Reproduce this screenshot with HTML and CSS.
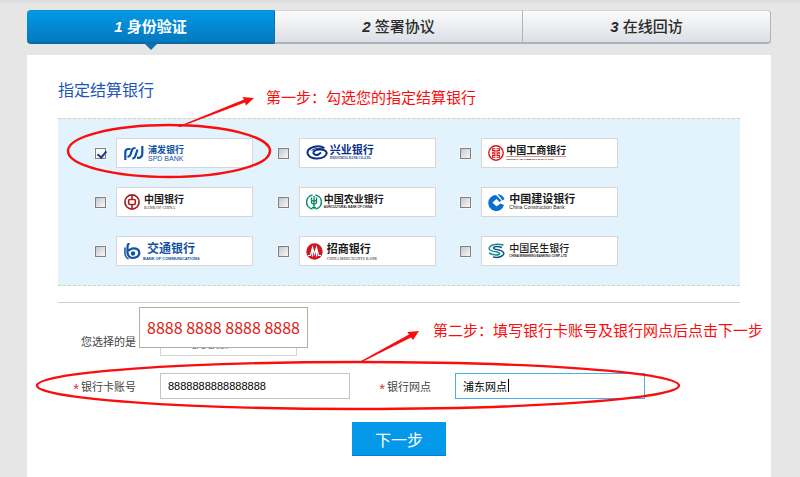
FILE: index.html
```html
<!DOCTYPE html>
<html lang="zh-CN">

<head>
  <meta charset="UTF-8">
  <title>指定结算银行</title>
  <link rel="stylesheet" href="styles.css">
</head>

<body>
  <ol class="steps">
    <li class="step step-on"><em>1</em> 身份验证</li>
    <li class="step"><em>2</em> 签署协议</li>
    <li class="step"><em>3</em> 在线回访</li>
  </ol>

  <form class="panel">
    <h2 class="panel-title">指定结算银行</h2>

    <!-- 银行列表 -->
    <div class="bank-list">
      <label class="bank">
        <input type="checkbox" class="bank-check" checked>
        <span class="bank-box spd">
          <svg width="20" height="16" viewBox="0 0 20 16" fill="none" stroke="#0f52a5" stroke-width="2.2">
            <path d="M1.300 15V7.500Q1.300 4 4.500 4H6.500"/>
            <path d="M3.500 11.500Q5.800 11.800 6.500 9.500L8 5Q8.700 3 11.500 3"/>
            <path d="M8.300 13.300Q10.500 13.500 11.200 11.500L13.500 4.500"/>
            <path d="M13 12.800H14.500Q18.300 12.500 18.300 8.500V1"/>
          </svg>
          <span class="bank-name">
            <b>浦发银行</b>
            <i>SPD BANK</i>
          </span>
        </span>
      </label>
      <label class="bank">
        <input type="checkbox" class="bank-check">
        <span class="bank-box cib">
          <svg width="22" height="16" viewBox="0 0 22 16" fill="none" stroke="#0b2f86">
            <path d="M18.500 3C14 .3 6 1 2.500 4.800C-.3 8.500 3 13.300 10 13.600C17 13.800 21.500 10.500 20.500 7.300C19 3.800 10.500 3.800 8 6.300C6 9.300 10 10.600 12.500 9.500L15 7.500" stroke-width="2"/>
            <path d="M5.500 5.500Q11 1.800 18 4.500" stroke-width="1"/>
          </svg>
          <span class="bank-name">
            <b>兴业银行</b>
            <i>INDUSTRIAL BANK CO.,LTD.</i>
          </span>
        </span>
      </label>
      <label class="bank">
        <input type="checkbox" class="bank-check">
        <span class="bank-box icbc">
          <svg width="16" height="16" viewBox="0 0 16 16" fill="none" stroke="#d7151a">
            <circle cx="8" cy="8" r="7.200" stroke-width="1.400"/>
            <path d="M7.500 3.800H4.500V5.500H7V7.300H3.800M8.500 3.800H11.500V5.500H9V7.300H12.200" stroke-width="1.100"/>
            <path d="M7.500 12.200H4.500V10.500H7V8.700H3.800M8.500 12.200H11.500V10.500H9V8.700H12.200" stroke-width="1.100"/>
          </svg>
          <span class="bank-name">
            <b>中国工商银行</b>
            <i>INDUSTRIAL AND COMMERCIAL BANK OF CHINA</i>
          </span>
        </span>
      </label>
      <label class="bank">
        <input type="checkbox" class="bank-check">
        <span class="bank-box boc">
          <svg width="16" height="16" viewBox="0 0 16 16" fill="none" stroke="#a71e26">
            <circle cx="8" cy="8" r="7.100" stroke-width="1.700"/>
            <rect x="4.700" y="5.500" width="6.600" height="5" rx="1" stroke-width="1.600"/>
            <path d="M8 1V5.500M8 10.500V15" stroke-width="1.600"/>
          </svg>
          <span class="bank-name">
            <b>中国银行</b>
            <i>BANK OF CHINA</i>
          </span>
        </span>
      </label>
      <label class="bank">
        <input type="checkbox" class="bank-check">
        <span class="bank-box abc">
          <svg width="16" height="16" viewBox="0 0 16 16" fill="none" stroke="#068a68">
            <path d="M6.500 1A7.100 7.100 0 0 0 6.500 15M9.500 1A7.100 7.100 0 0 1 9.500 15" stroke-width="1.500"/>
            <path d="M8 2V15M5.500 3.500V6L8 7.500L10.500 6V3.500M5.500 6.500V9L8 10.500L10.500 9V6.500" stroke-width="1.300"/>
            <path d="M6 13.500H10" stroke-width="1.200"/>
          </svg>
          <span class="bank-name">
            <b>中国农业银行</b>
            <i>AGRICULTURAL BANK OF CHINA</i>
          </span>
        </span>
      </label>
      <label class="bank">
        <input type="checkbox" class="bank-check">
        <span class="bank-box ccb">
          <svg width="17" height="17" viewBox="0 0 17 17" fill="#0a6fd0">
            <path d="M8 1A8 8 0 1 0 16 11L12.500 9.500L8.500 12.500L4.500 8.500L8.500 5L11.500 8L13.500 6.500Z"/>
            <path d="M9.500 0Q14.500 .5 16.500 5L14.500 6.500Q12.500 3 9.500 0Z"/>
          </svg>
          <span class="bank-name">
            <b>中国建设银行</b>
            <i>China Construction Bank</i>
          </span>
        </span>
      </label>
      <label class="bank">
        <input type="checkbox" class="bank-check">
        <span class="bank-box bcm">
          <svg width="17" height="17" viewBox="0 0 17 17" fill="none" stroke="#14529f">
            <path d="M5.500 0Q3.500 1 3.500 4V10Q4.500 15 9 15Q15.300 14.500 15.300 9.500Q14.500 4.800 8 5.500L3.500 8" stroke-width="2.200"/>
            <path d="M1 4.500V11Q1.500 14.500 4.500 16" stroke-width="1.500"/>
            <circle cx="9" cy="10.500" r="2.200" fill="#14529f" stroke="none"/>
          </svg>
          <span class="bank-name">
            <b>交通银行</b>
            <i>BANK OF COMMUNICATIONS</i>
          </span>
        </span>
      </label>
      <label class="bank">
        <input type="checkbox" class="bank-check">
        <span class="bank-box cmb">
          <svg width="17" height="17" viewBox="0 0 17 17">
            <circle cx="8.500" cy="8.500" r="8.200" fill="#cf1720"/>
            <path d="M2 12.500H4.500L6.500 4.500L8.500 11L10.500 4.500L12.500 12.500H15M6.500 5V13.500M10.500 5V13.500" fill="none" stroke="#fff" stroke-width="1.200"/>
          </svg>
          <span class="bank-name">
            <b>招商银行</b>
            <i>CHINA MERCHANTS BANK</i>
          </span>
        </span>
      </label>
      <label class="bank">
        <input type="checkbox" class="bank-check">
        <span class="bank-box cmbc">
          <svg width="17" height="16" viewBox="0 0 17 16" fill="none">
            <path d="M15.500 2Q9 .5 4.500 2Q-.5 4.500 2 7Q4 8.500 9 9Q13 10 11 11.500Q7 13 1 10" stroke="#158c8c" stroke-width="1.500"/>
            <path d="M14 4.500Q8 2.500 5.500 4.500Q5 6 10 6.800Q17 8.500 15.500 11.500Q12 15.500 5 14" stroke="#17558f" stroke-width="1.500"/>
          </svg>
          <span class="bank-name">
            <b>中国民生银行</b>
            <i>CHINA MINSHENG BANKING CORP.,LTD</i>
          </span>
        </span>
      </label>
    </div>

    <!-- 账号信息 -->
    <div class="row">
      <span class="row-label">您选择的是</span>
      <div class="chosen">
        <span class="bank-box spd">
          <svg width="20" height="16" viewBox="0 0 20 16" fill="none" stroke="#0f52a5" stroke-width="2.2">
            <path d="M1.300 15V7.500Q1.300 4 4.500 4H6.500"/>
            <path d="M3.500 11.500Q5.800 11.800 6.500 9.500L8 5Q8.700 3 11.500 3"/>
            <path d="M8.300 13.300Q10.500 13.500 11.200 11.500L13.500 4.500"/>
            <path d="M13 12.800H14.500Q18.300 12.500 18.300 8.500V1"/>
          </svg>
          <span class="bank-name">
            <b>浦发银行</b>
            <i>SPD BANK</i>
          </span>
        </span>
        <div class="card-tip">8888 8888 8888 8888</div>
      </div>
    </div>
    <div class="row">
      <label class="row-label" for="card"><span class="must">*</span>银行卡账号</label>
      <input type="text" id="card" class="row-input" value="8888888888888888">
      <label class="row-label" for="branch"><span class="must">*</span>银行网点</label>
      <span class="branch">
        <input type="text" id="branch" class="row-input row-input-on" value="浦东网点">
        <span class="caret"></span>
      </span>
    </div>
    <button type="button" class="next">下一步</button>

    <!-- 操作提示 -->
    <svg class="marks" width="744" height="422" viewBox="0 0 744 422" fill="none" stroke="#fb0d0d" stroke-width="2.4">
      <ellipse cx="142" cy="96" rx="101" ry="26"/>
      <ellipse cx="331" cy="330.500" rx="321" ry="23.500"/>
      <g fill="#fb0d0d" stroke="none">
        <path d="M151 71.500L217 44.500L215.500 42L227 43L219 50.500L218 47.500L153 72Z"/>
        <path d="M334 306L382 279.500L380.500 277L392 276L386 285L384 282.500L335 307Z"/>
      </g>
    </svg>
    <span class="note note-one">第一步：勾选您的指定结算银行</span>
    <span class="note note-two">第二步：填写银行卡账号及银行网点后点击下一步</span>
  </form>
</body>

</html>
```
FILE: styles.css
```css
* {
  box-sizing: border-box;
}

body {
  margin: 0px;
  padding: 10px 29px 0px 27px;
  min-height: 100vh;
  display: flex;
  flex-direction: column;
  background: #e6e6e6 linear-gradient(#dadada, #e6e6e6) no-repeat 0px 0px / 100% 4px;
  font-family: "Liberation Sans", "Noto Sans CJK SC", sans-serif;
  font-size: 11px;
  color: #444;
}

/* 步骤条 */
.steps {
  display: flex;
  margin: 0px 0px 11px 0px;
  padding: 0px;
  height: 34px;
  list-style: none;
}

.step {
  flex: 1;
  position: relative;
  line-height: 31px;
  text-align: center;
  font-size: 15px;
  font-weight: 500;
  color: #2b2b2b;
  background: linear-gradient(#fafbfc, #dcdfe5);
  border-top: 1px solid #d4d6da;
  border-bottom: 2px solid #abb3bd;
  border-right: 1px solid #abb3bd;
}

.step em {
  font-weight: bold;
}

.step:last-child {
  border-radius: 0px 4px 4px 0px;
}

.step-on {
  color: #fff;
  font-weight: bold;
  background: linear-gradient(#0299e6, #0579bd);
  border-color: #1588cb #0b6fb0 #0b69a6;
  border-radius: 4px 0px 0px 4px;
}

/* 当前步骤的小三角 */
.step-on::after {
  content: "";
  position: absolute;
  left: 50%;
  top: 32px;
  margin-left: -7px;
  border: 7px solid transparent;
  border-top-color: #0b6fb0;
  border-bottom: 0px;
}

.panel {
  flex: 1;
  position: relative;
  padding: 26px 31px 20px 31px;
  background: #fff;
}

.panel-title {
  margin: 0px 0px 17px 0px;
  line-height: 20px;
  font-size: 16px;
  font-weight: normal;
  color: #1c57b5;
}

/* 银行列表 */
.bank-list {
  display: grid;
  grid-template-columns: repeat(3, 1fr);
  row-gap: 19px;
  padding: 19px 97px 19px 37px;
  background: #e2f3fe;
  border-top: 1px dashed #d6d3ac;
  border-bottom: 1px dashed #d6d3ac;
}

.bank {
  display: flex;
  align-items: center;
  gap: 10px;
}

.bank-check {
  appearance: none;
  flex: none;
  position: relative;
  margin: 0px;
  width: 11px;
  height: 11px;
  border: 1px solid #808080;
  outline: 1px solid #f2f7fa;
  background: linear-gradient(135deg, #c4c8cd, #f8f8f8);
}

.bank-check:checked {
  background: #f8f8f8;
}

.bank-check:checked::after {
  content: "";
  position: absolute;
  left: 3px;
  top: 0px;
  width: 4px;
  height: 7px;
  border: solid #24398a;
  border-width: 0px 2px 2px 0px;
  transform: rotate(40deg);
}

.bank-box {
  display: flex;
  align-items: center;
  gap: 4px;
  width: 137px;
  height: 30px;
  padding-left: 6px;
  background: #fff;
  border: 1px solid #d6d6d6;
}

.bank-box svg {
  flex: none;
}

.bank-name b,
.bank-name i {
  display: block;
  font-style: normal;
  white-space: nowrap;
}

.bank-name b {
  font-size: 10px;
  line-height: 11px;
}

.bank-name i {
  font-size: 4px;
  line-height: 5px;
}

.spd {
  color: #0f52a5;
  padding-left: 7px;
}

.spd .bank-name b {
  font-size: 9px;
  line-height: 10px;
}

.spd .bank-name i {
  font-size: 7px;
  line-height: 7px;
}

.cib {
  color: #0b2f86;
}

.cib .bank-name b,
.ccb .bank-name b {
  font-size: 11px;
}

.cib .bank-name i,
.abc .bank-name i,
.cmbc .bank-name i {
  font-size: 3px;
  font-weight: bold;
}

.icbc,
.boc,
.abc,
.ccb,
.cmb,
.cmbc {
  color: #1a1a1a;
}

.icbc,
.cib,
.abc,
.bcm {
  gap: 2px;
}

.icbc .bank-name b {
  border-bottom: 1px solid #e58b8b;
}

.icbc .bank-name i {
  font-size: 2px;
  line-height: 4px;
  font-weight: bold;
}

.boc,
.bcm {
  padding-left: 7px;
}

.boc .bank-name i,
.cmb .bank-name i,
.cib .bank-name i {
  font-family: "Liberation Serif", serif;
}

.ccb .bank-name i {
  font-size: 5px;
}

.bcm {
  color: #14529f;
}

.bcm .bank-name b {
  padding-left: 4px;
  font-size: 12px;
  line-height: 14px;
}

.bcm .bank-name i {
  font-weight: bold;
}

.cmb .bank-name b {
  font-size: 11px;
  line-height: 14px;
}

.cmbc .bank-name b {
  font-weight: 500;
}

/* 账号信息 */
.row {
  display: flex;
  align-items: center;
  margin-top: 17px;
}

.bank-list + .row {
  margin-top: 16px;
  padding-top: 23px;
  border-top: 1px solid #cfcfcf;
}

.row-label {
  width: 78px;
  margin-right: 24px;
  text-align: right;
  white-space: nowrap;
}

.row-input + .row-label {
  width: 81px;
}

.must {
  margin-right: 2px;
  font-size: 15px;
  line-height: 11px;
  vertical-align: middle;
  color: #e0312f;
}

.row-input {
  display: block;
  width: 190px;
  height: 26px;
  padding: 0px 7px;
  border: 1px solid #c4c4c4;
  outline: none;
  background: #fff;
  font-family: inherit;
  font-size: 11px;
  color: #000;
}

.row-input-on {
  border-color: #45b2ea;
}

.branch {
  position: relative;
}

.caret {
  position: absolute;
  left: 53px;
  top: 6px;
  width: 1px;
  height: 13px;
  background: #000;
}

.chosen {
  position: relative;
}

.card-tip {
  position: absolute;
  left: -21px;
  top: -19px;
  width: 169px;
  height: 41px;
  line-height: 39px;
  text-align: center;
  font-family: "Noto Sans CJK SC", sans-serif;
  font-size: 16px;
  white-space: nowrap;
  color: #dc2113;
  background: #fff;
  border: 1px solid #b5ad98;
}

.next {
  display: block;
  width: 94px;
  height: 34px;
  margin: 23px auto 0px auto;
  padding: 0px;
  border: 0px;
  border-bottom: 1px solid #077fd0;
  background: #0399e8;
  font-family: inherit;
  font-size: 16px;
  color: #fff;
}

/* 操作提示 */
.marks {
  position: absolute;
  left: 0px;
  top: 0px;
  pointer-events: none;
}

.note {
  position: absolute;
  font-size: 15px;
  line-height: 20px;
  white-space: nowrap;
  color: #fb0d0d;
}

.note-one {
  left: 239px;
  top: 33px;
}

.note-two {
  left: 406px;
  top: 266px;
}
```
